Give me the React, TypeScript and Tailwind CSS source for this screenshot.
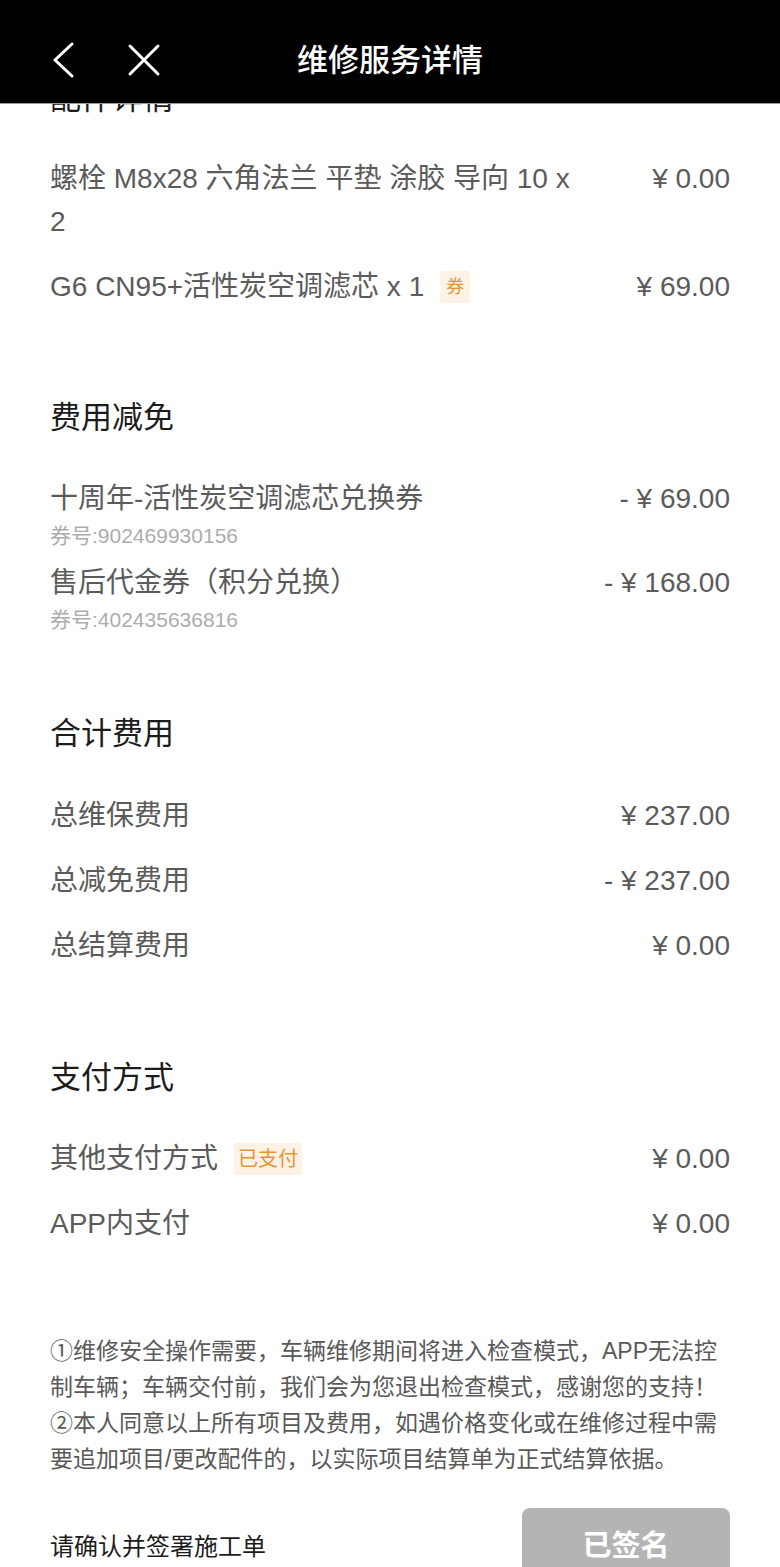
import React from "react";

type Line = { label: React.ReactNode; price: string; badge?: string; sub?: string };

const PARTS: Line[] = [
  { label: <>螺栓 M8x28 六角法兰 平垫 涂胶 导向 10 x<br />2</>, price: "¥ 0.00" },
  { label: "G6 CN95+活性炭空调滤芯 x 1", price: "¥ 69.00", badge: "券" },
];

const DISCOUNTS: Line[] = [
  { label: "十周年-活性炭空调滤芯兑换券", price: "- ¥ 69.00", sub: "券号:902469930156" },
  { label: "售后代金券（积分兑换）", price: "- ¥ 168.00", sub: "券号:402435636816" },
];

const TOTALS: Line[] = [
  { label: "总维保费用", price: "¥ 237.00" },
  { label: "总减免费用", price: "- ¥ 237.00" },
  { label: "总结算费用", price: "¥ 0.00" },
];

const PAYMENTS: Line[] = [
  { label: "其他支付方式", price: "¥ 0.00", badge: "已支付" },
  { label: "APP内支付", price: "¥ 0.00" },
];

const SectionTitle: React.FC<{ title: string; className?: string }> = ({ title, className = "" }) => (
  <h3 className={`h-[40px] text-[31px] leading-[40px] text-[#1c1c1c] ${className}`}>{title}</h3>
);

const Row: React.FC<{ item: Line; className?: string }> = ({ item, className = "" }) => (
  <div className={`flex items-start justify-between text-[28px] leading-[43px] text-[#5b5b5b] ${className}`}>
    <div className="flex items-center">
      <span>{item.label}</span>
      {item.badge && (
        <span
          className={`ml-[16px] flex h-[32px] items-center rounded-[3px] bg-[#fdf2e4] text-[#e39537] ${
            item.badge.length > 1 ? "px-[4px] text-[20px]" : "px-[6px] text-[18px]"
          } leading-none`}
        >
          {item.badge}
        </span>
      )}
    </div>
    <span className="shrink-0 whitespace-nowrap">{item.price}</span>
  </div>
);

const DiscountRow: React.FC<{ item: Line; className?: string }> = ({ item, className = "" }) => (
  <div className={className}>
    <div className="flex items-center justify-between text-[28px] leading-[40px] text-[#5b5b5b]">
      <span>{item.label}</span>
      <span className="whitespace-nowrap">{item.price}</span>
    </div>
    <div className="mt-[3px] text-[21px] leading-[28px] text-[#adadad]">{item.sub}</div>
  </div>
);

export default function App() {
  return (
    <div
      className="relative h-[1567px] overflow-hidden bg-white"
      style={{ fontFamily: '"Liberation Sans", "Noto Sans CJK SC", sans-serif' }}
    >
      <header className="absolute inset-x-0 top-0 z-10 flex h-[104px] items-center justify-center border-b border-[#9a9a9a] bg-black">
        <svg className="absolute left-[50px] top-[42px]" width="26" height="36" viewBox="0 0 26 36" fill="none">
          <path d="M22 2 L5 18 L22 34" stroke="white" strokeWidth="3" strokeLinecap="round" strokeLinejoin="round" />
        </svg>
        <svg className="absolute left-[127px] top-[43px]" width="34" height="34" viewBox="0 0 34 34" fill="none">
          <path d="M3 3 L31 31 M31 3 L3 31" stroke="white" strokeWidth="3" strokeLinecap="round" />
        </svg>
        <h1 className="mt-[18px] text-[31px] font-medium leading-none text-white">维修服务详情</h1>
      </header>

      <main className="px-[50px] pt-[79px]">
        <SectionTitle title="配件详情" />
        {PARTS.map((p, i) => (
          <Row key={i} item={p} className={i === 0 ? "mt-[38px]" : "mt-[22px]"} />
        ))}

        <SectionTitle title="费用减免" className="mt-[90px]" />
        {DISCOUNTS.map((d, i) => (
          <DiscountRow key={i} item={d} className={i === 0 ? "mt-[41px]" : "mt-[13px]"} />
        ))}

        <SectionTitle title="合计费用" className="mt-[80px]" />
        {TOTALS.map((t, i) => (
          <Row key={i} item={t} className={i === 0 ? "mt-[40px]" : "mt-[22px]"} />
        ))}

        <SectionTitle title="支付方式" className="mt-[91px]" />
        {PAYMENTS.map((p, i) => (
          <Row key={i} item={p} className={i === 0 ? "mt-[39px]" : "mt-[22px]"} />
        ))}

        <div className="mt-[88px] text-[23px] leading-[36px] text-[#595959]">
          <p>
            ①维修安全操作需要，车辆维修期间将进入检查模式，APP无法控
            <br />
            制车辆；车辆交付前，我们会为您退出检查模式，感谢您的支持！
          </p>
          <p>
            ②本人同意以上所有项目及费用，如遇价格变化或在维修过程中需
            <br />
            要追加项目/更改配件的，以实际项目结算单为正式结算依据。
          </p>
        </div>

        <div className="mt-[31px] flex h-[78px] items-center justify-between">
          <span className="text-[24px] text-[#1c1c1c]">请确认并签署施工单</span>
          <button className="flex h-[78px] w-[208px] items-center justify-center rounded-[8px] bg-[#b4b4b4] text-[29px] font-bold text-white">
            已签名
          </button>
        </div>
      </main>
    </div>
  );
}
